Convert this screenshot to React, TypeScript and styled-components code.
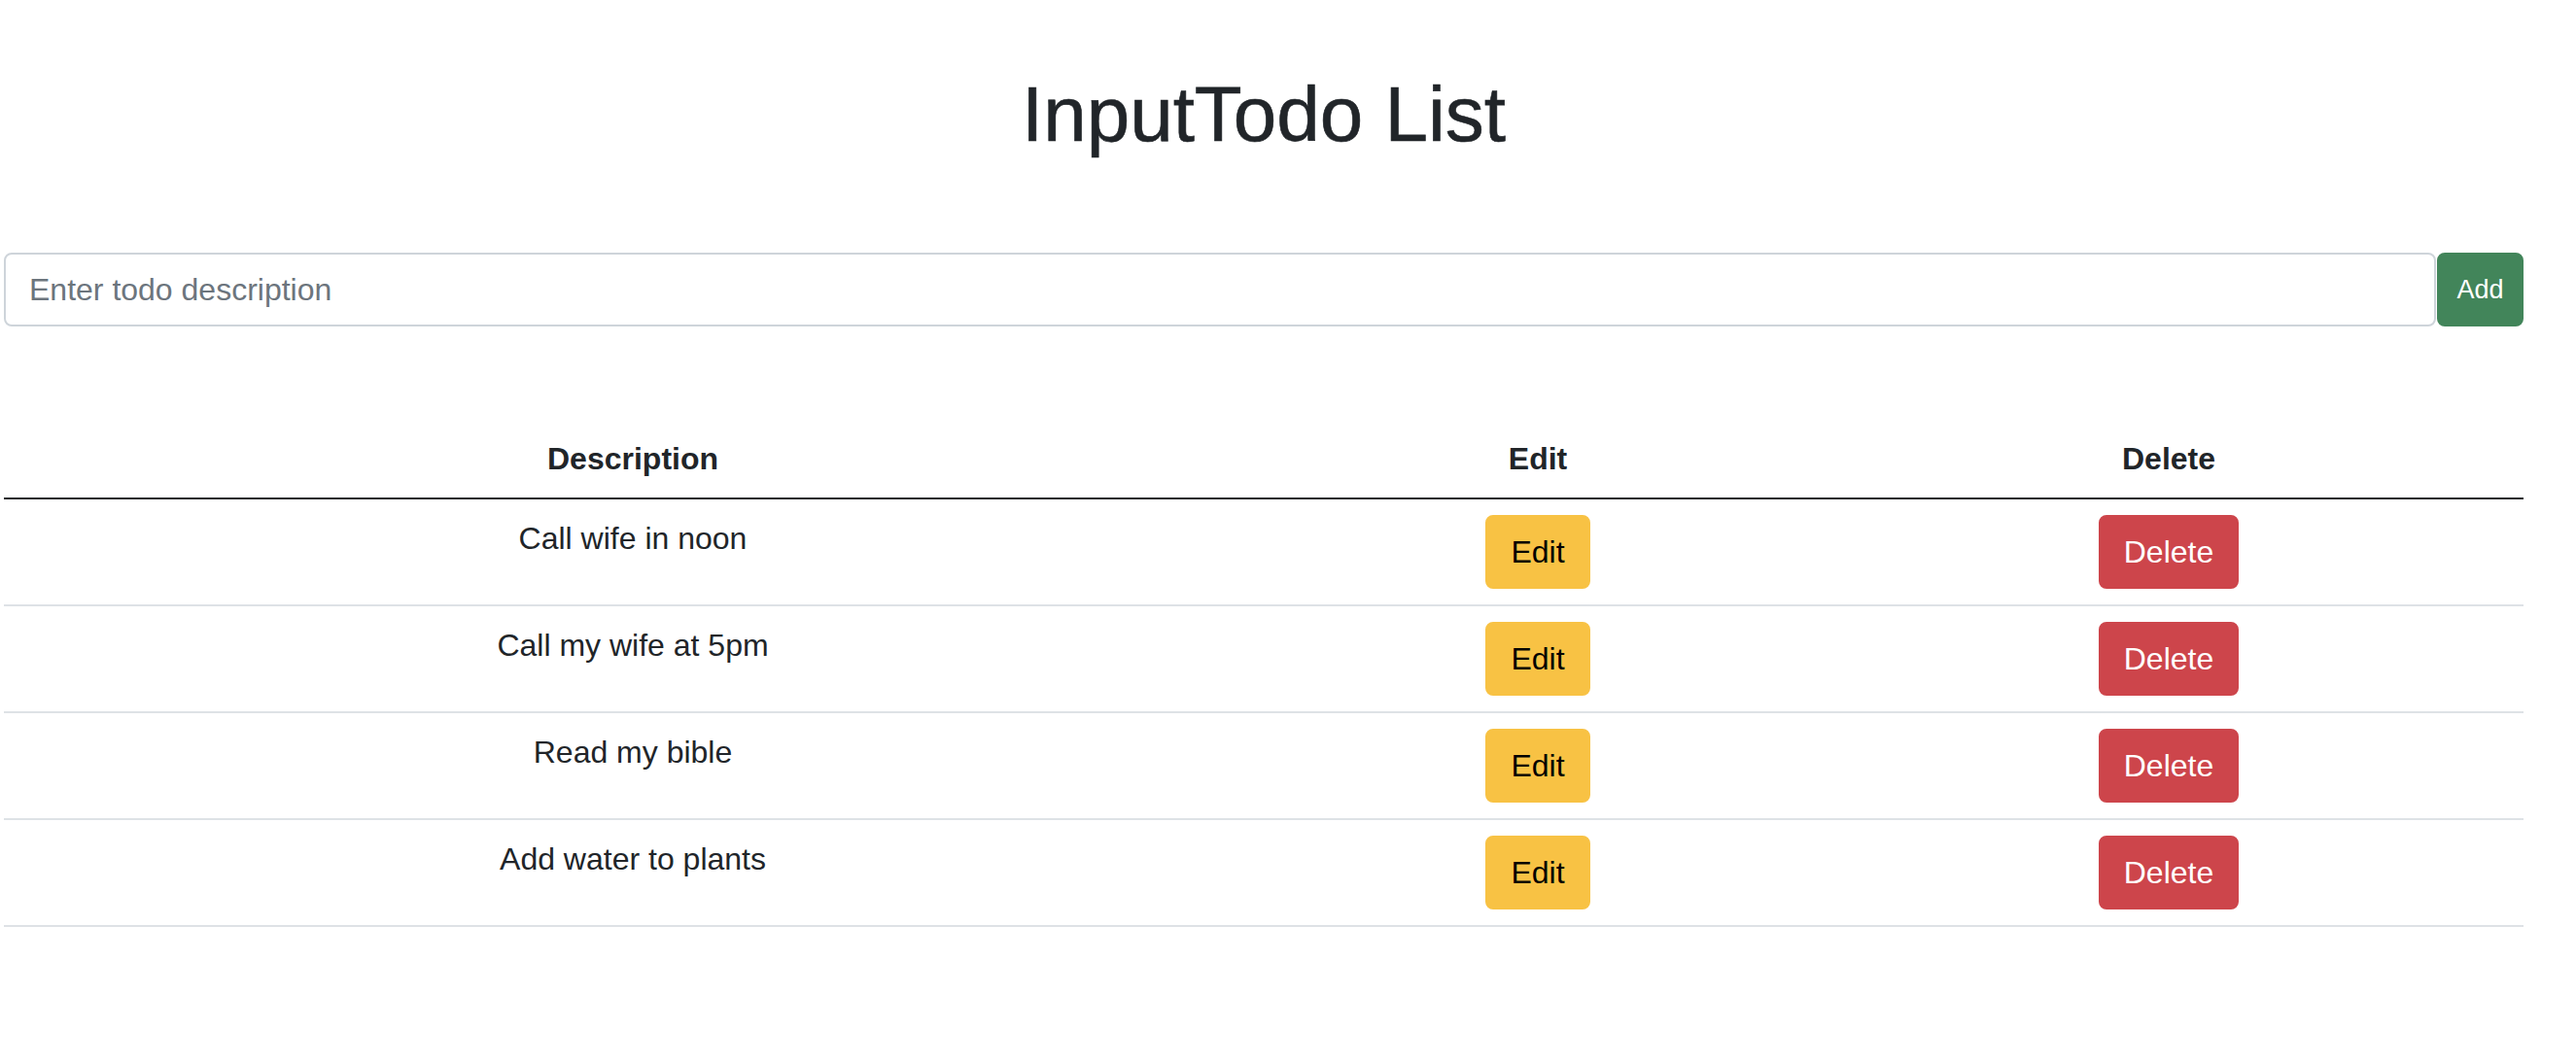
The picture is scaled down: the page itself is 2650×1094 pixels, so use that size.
import React from "react";
import styled, { createGlobalStyle } from "styled-components";

const GlobalStyle = createGlobalStyle`
  html, body {
    margin: 0;
    padding: 0;
    background: #ffffff;
  }
  body {
    font-family: "Liberation Sans", Arial, sans-serif;
    color: #212529;
  }
  * { box-sizing: border-box; }
`;

const Page = styled.div`
  width: 2592px;
  margin-left: 4px;
  padding-top: 70px;
`;

const Title = styled.h1`
  margin: 0;
  text-align: center;
  font-size: 80px;
  line-height: 96px;
  font-weight: 500;
  color: #212529;
  -webkit-text-stroke: 0.6px #212529;
`;

const Form = styled.form`
  display: flex;
  margin-top: 94px;
`;

const TextInput = styled.input`
  flex: 1;
  height: 76px;
  padding: 12px 24px;
  font-family: "Liberation Sans", Arial, sans-serif;
  font-size: 32px;
  line-height: 48px;
  color: #212529;
  background: #fff;
  border: 2px solid #ced4da;
  border-radius: 8px;
  outline: none;
  &::placeholder {
    color: #6c757d;
  }
`;

const AddButton = styled.button`
  width: 89px;
  height: 76px;
  margin-left: 1px;
  padding: 0;
  font-family: "Liberation Sans", Arial, sans-serif;
  font-size: 27px;
  color: #fff;
  background: #42855a;
  border: 2px solid #42855a;
  border-radius: 8px;
`;

const Table = styled.table`
  width: 100%;
  margin-top: 96px;
  border-collapse: collapse;
  table-layout: fixed;
`;

const HeadCell = styled.th<{ $w: number }>`
  width: ${(p) => p.$w}px;
  padding: 16px;
  font-size: 32px;
  line-height: 48px;
  font-weight: 700;
  text-align: center;
  vertical-align: bottom;
  border-bottom: 2px solid #212529;
`;

const Row = styled.tr`
  border-bottom: 2px solid #dee2e6;
`;

const Cell = styled.td`
  padding: 16px;
  font-size: 32px;
  line-height: 48px;
  text-align: center;
  vertical-align: top;
  color: #212529;
`;

const ActionButton = styled.button<{ $variant: "edit" | "delete" }>`
  display: inline-block;
  vertical-align: top;
  height: 76px;
  padding: 12px 24px;
  font-family: "Liberation Sans", Arial, sans-serif;
  font-size: 32px;
  line-height: 48px;
  border-radius: 8px;
  border: 2px solid ${(p) => (p.$variant === "edit" ? "#f8c244" : "#cd454b")};
  background: ${(p) => (p.$variant === "edit" ? "#f8c244" : "#cd454b")};
  color: ${(p) => (p.$variant === "edit" ? "#000" : "#fff")};
`;

const todos = [
  "Call wife in noon",
  "Call my wife at 5pm",
  "Read my bible",
  "Add water to plants",
];

export default function App() {
  return (
    <>
      <GlobalStyle />
      <Page>
        <Title>InputTodo List</Title>
        <Form onSubmit={(e) => e.preventDefault()}>
          <TextInput placeholder="Enter todo description" />
          <AddButton type="submit">Add</AddButton>
        </Form>
        <Table>
          <thead>
            <tr>
              <HeadCell $w={1294}>Description</HeadCell>
              <HeadCell $w={568}>Edit</HeadCell>
              <HeadCell $w={730}>Delete</HeadCell>
            </tr>
          </thead>
          <tbody>
            {todos.map((t) => (
              <Row key={t}>
                <Cell>{t}</Cell>
                <Cell>
                  <ActionButton $variant="edit">Edit</ActionButton>
                </Cell>
                <Cell>
                  <ActionButton $variant="delete">Delete</ActionButton>
                </Cell>
              </Row>
            ))}
          </tbody>
        </Table>
      </Page>
    </>
  );
}
